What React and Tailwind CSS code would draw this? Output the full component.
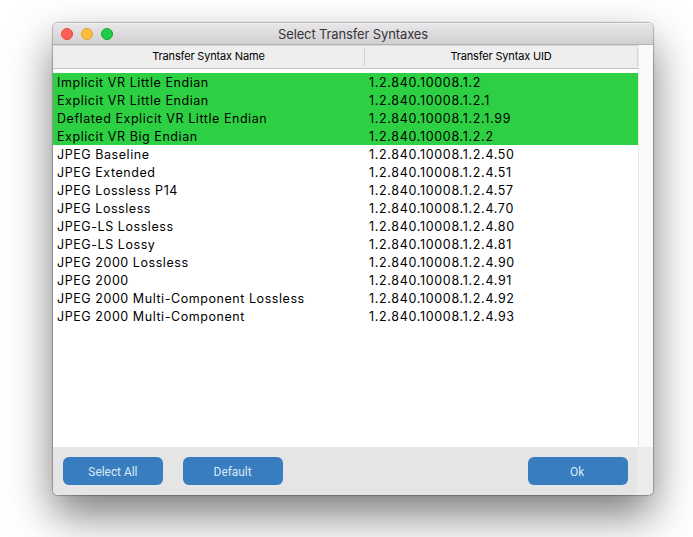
const ROWS = [
  ['Implicit VR Little Endian', '1.2.840.10008.1.2', true],
  ['Explicit VR Little Endian', '1.2.840.10008.1.2.1', true],
  ['Deflated Explicit VR Little Endian', '1.2.840.10008.1.2.1.99', true],
  ['Explicit VR Big Endian', '1.2.840.10008.1.2.2', true],
  ['JPEG Baseline', '1.2.840.10008.1.2.4.50', false],
  ['JPEG Extended', '1.2.840.10008.1.2.4.51', false],
  ['JPEG Lossless P14', '1.2.840.10008.1.2.4.57', false],
  ['JPEG Lossless', '1.2.840.10008.1.2.4.70', false],
  ['JPEG-LS Lossless', '1.2.840.10008.1.2.4.80', false],
  ['JPEG-LS Lossy', '1.2.840.10008.1.2.4.81', false],
  ['JPEG 2000 Lossless', '1.2.840.10008.1.2.4.90', false],
  ['JPEG 2000', '1.2.840.10008.1.2.4.91', false],
  ['JPEG 2000 Multi-Component Lossless', '1.2.840.10008.1.2.4.92', false],
  ['JPEG 2000 Multi-Component', '1.2.840.10008.1.2.4.93', false],
];

function TitleBar() {
  return (
    <header className="grid h-[22px] shrink-0 grid-cols-[1fr_auto_1fr] items-center border-t border-b border-t-[#f4f3f4] border-b-[#b3b1b3] bg-linear-to-b from-[#e8e6e8] to-[#d1cfd1]">
      <div className="flex gap-2 pl-2">
        <span className="size-3 rounded-full border border-[#e2463f] bg-[#ff5f57]" />
        <span className="size-3 rounded-full border border-[#e1a12f] bg-[#ffbd3e]" />
        <span className="size-3 rounded-full border border-[#12ac28] bg-[#1fcb4a]" />
      </div>
      <h1 className="text-[13px] leading-5 tracking-[-0.13px] text-[#383638]">Select Transfer Syntaxes</h1>
      <div />
    </header>
  );
}

function TableHeader() {
  return (
    <div className="flex h-6 items-center border-t border-b border-t-[#d8d8d8] border-b-[#c3c3c3] bg-[#eeeeee] text-[11px] tracking-[-0.16px] text-black">
      <div className="flex h-[18px] w-[312px] items-center justify-center border-r border-[#d2d2d2] pb-0.5">Transfer Syntax Name</div>
      <div className="flex h-[18px] flex-1 items-center justify-center border-r border-[#d2d2d2] pb-0.5">Transfer Syntax UID</div>
    </div>
  );
}

function Button({ children }) {
  return (
    <button className="flex h-7 w-[100px] items-center justify-center rounded-[6px] bg-[#377dbf] pt-px pr-px font-[Roboto,sans-serif] text-[13.5px] text-[#dce9f5]">
      <span className="inline-block scale-x-[0.88]">{children}</span>
    </button>
  );
}

export default function App() {
  return (
    <div className="h-[537px] w-[693px] overflow-hidden bg-white pt-[23px] pl-[53px] font-[Inter,sans-serif]">
      <div className="h-[472px] w-[600px] rounded-[5px] shadow-[0_0_1px_1px_rgba(0,0,0,0.25),0_20px_44px_0_rgba(0,0,0,0.52)]">
        <div className="flex h-full flex-col overflow-hidden rounded-[5px] bg-[#ebebeb]">
          <TitleBar />
          <div className="flex h-[402px] shrink-0 bg-white">
            <div className="w-[585px]">
              <TableHeader />
              <div className="pt-1 text-[12.5px] leading-[19px] text-black">
                {ROWS.map(([name, uid, selected]) => (
                  <div key={uid} className={selected ? 'flex h-[18px] bg-[#2dd042]' : 'flex h-[18px]'}>
                    <div className="w-[312px] pl-1 tracking-[0.56px]">{name}</div>
                    <div className="flex-1 pl-1 tracking-[0.68px]">{uid}</div>
                  </div>
                ))}
              </div>
            </div>
            <div className="w-[15px] border-l border-[#e8e8e8] bg-[#fafafa]" />
          </div>
          <footer className="flex h-12 w-[584px] items-center rounded-r-[5px] bg-[#e5e5e5] pr-[9px] pl-[10px]">
            <Button>Select All</Button>
            <div className="w-5" />
            <Button>Default</Button>
            <div className="flex-1" />
            <Button>Ok</Button>
          </footer>
        </div>
      </div>
    </div>
  );
}
